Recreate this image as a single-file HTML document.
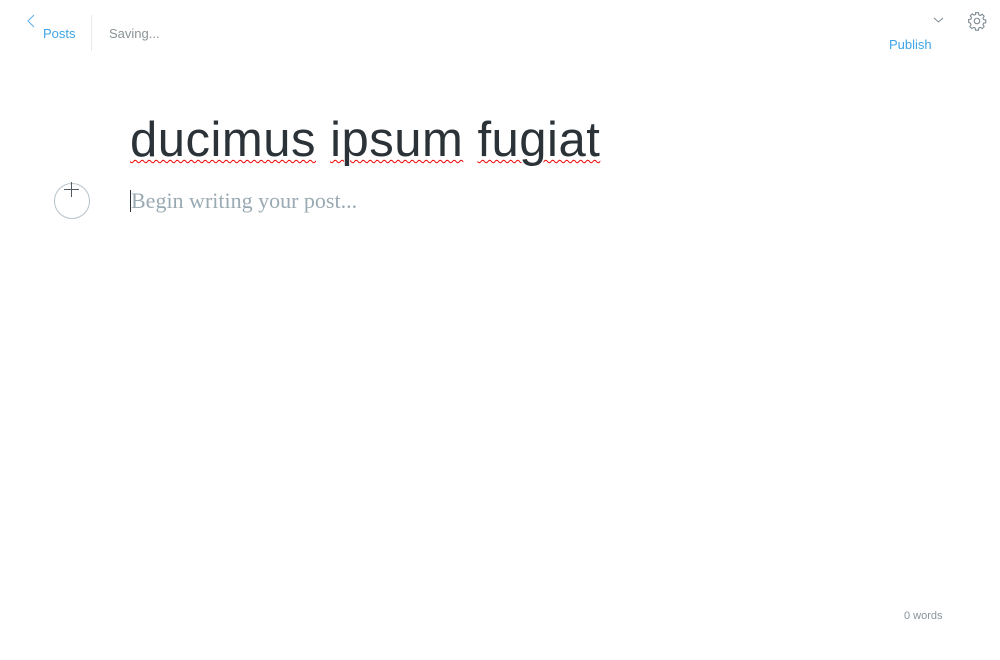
<!DOCTYPE html>
<html><head><meta charset="utf-8"><style>
body{margin:0;width:1000px;height:660px;background:#fff;position:relative;overflow:hidden;font-family:"Liberation Sans",sans-serif}
.a{position:absolute;white-space:nowrap}
.sp{text-decoration:underline wavy #e00;text-decoration-thickness:1px;text-underline-offset:3px}
</style></head><body>
<svg class="a" style="left:26px;top:14px" width="10" height="14"><path d="M8 1 L2 7 L8 13" fill="none" stroke="#5ab0ea" stroke-width="1"/></svg>
<div class="a" style="left:43px;top:26px;font-size:13px;color:#3ea4e6">Posts</div>
<div class="a" style="left:91px;top:15px;width:1px;height:36px;background:#e6ebee"></div>
<div class="a" style="left:109px;top:26px;font-size:13px;color:#8a9499">Saving...</div>
<svg class="a" style="left:933px;top:16px" width="11" height="8"><path d="M1 2 L5.5 6 L10 2" fill="none" stroke="#7d8a91" stroke-width="1"/></svg>
<div class="a" style="left:889px;top:37px;font-size:13px;color:#3ea4e6">Publish</div>
<svg class="a" style="left:967px;top:11px" width="20" height="20" viewBox="0 0 24 24"><path d="M10.3 2h3.4l.5 2.6 1.8.8 2.2-1.5 2.4 2.4-1.5 2.2.8 1.8 2.6.5v3.4l-2.6.5-.8 1.8 1.5 2.2-2.4 2.4-2.2-1.5-1.8.8-.5 2.6h-3.4l-.5-2.6-1.8-.8-2.2 1.5-2.4-2.4 1.5-2.2-.8-1.8L2 13.7v-3.4l2.6-.5.8-1.8-1.5-2.2 2.4-2.4 2.2 1.5 1.8-.8z" fill="none" stroke="#7d8a91" stroke-width="1.3"/><circle cx="12" cy="12" r="3.3" fill="none" stroke="#7d8a91" stroke-width="1.3"/></svg>
<div class="a" style="left:130px;top:112px;font-size:49px;color:#2b3338;letter-spacing:0.5px"><span class="sp">ducimus</span> <span class="sp">ipsum</span> <span class="sp">fugiat</span></div>
<div class="a" style="left:54px;top:183px;width:34px;height:34px;border:1px solid #b5c3ca;border-radius:50%"></div>
<div class="a" style="left:64px;top:189px;width:15px;height:1px;background:#505a60"></div>
<div class="a" style="left:71px;top:182px;width:1px;height:15px;background:#505a60"></div>
<div class="a" style="left:130px;top:190px;width:1px;height:22px;background:#2b3338"></div>
<div class="a" style="left:131px;top:188px;font-family:'Liberation Serif',serif;font-size:22px;color:#9aaab3">Begin writing your post...</div>
<div class="a" style="left:904px;top:610px;font-size:11px;color:#8a9499">0 words</div>
</body></html>
